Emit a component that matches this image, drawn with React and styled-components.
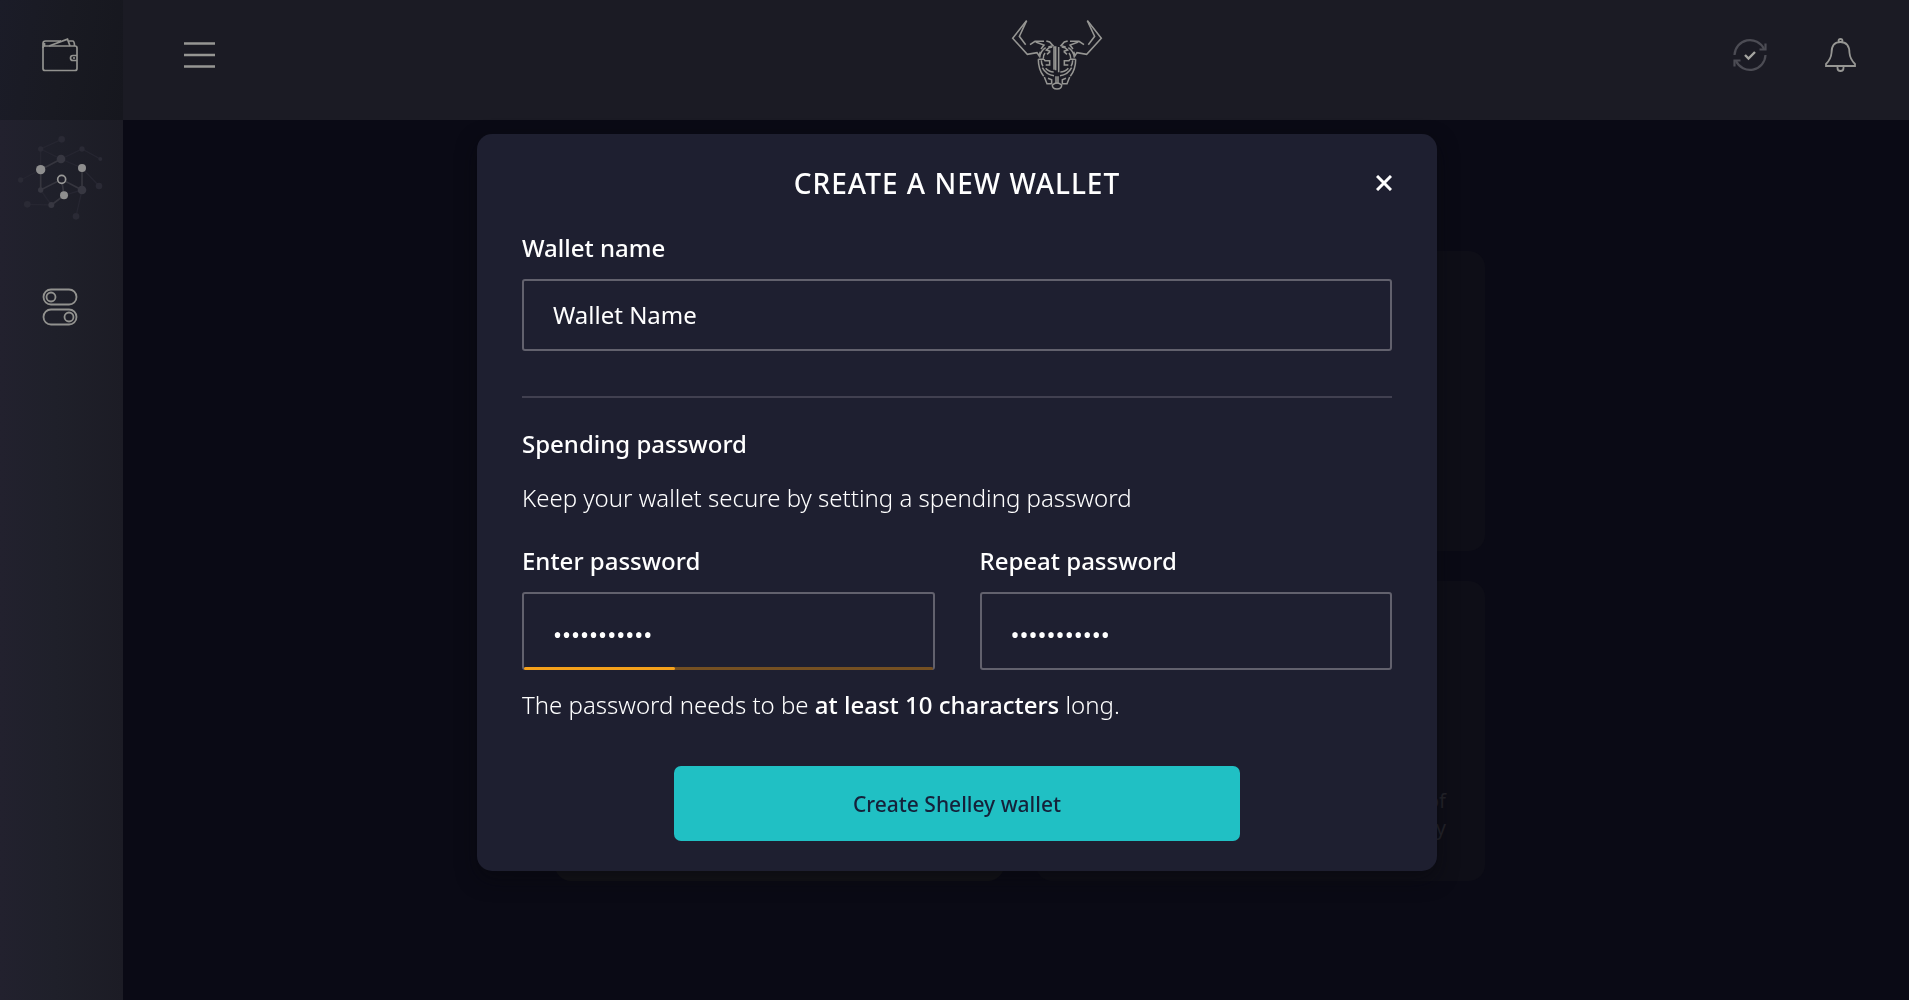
import React, { useState } from "react";
import styled, { createGlobalStyle } from "styled-components";

const GlobalStyle = createGlobalStyle`
  *, *::before, *::after { box-sizing: border-box; }
  body {
    margin: 0;
    background: #0a0a15;
    color: #fff;
    font-family: "Noto Sans", "Open Sans", sans-serif;
    font-size: 24px;
    line-height: 32px;
  }
  button, input { font: inherit; color: inherit; }
`;

const Shell = styled.div`
  display: grid;
  grid-template-columns: 123px 1fr;
  min-height: 100vh;
`;

const Sidebar = styled.nav`
  display: flex;
  flex-direction: column;
  align-items: center;
  background: linear-gradient(90deg, #22212e 0%, #1f202a 45%, #1c1c25 100%);
`;

const SideLink = styled.a`
  display: flex;
  align-items: center;
  justify-content: center;
  width: 100%;
  height: ${(p) => p.$height}px;
  padding-right: 3px;
  padding-bottom: ${(p) => (p.$active ? 10 : 0)}px;
  color: #92928f;
  background: ${(p) => (p.$active ? "linear-gradient(100deg, #1b1c28 0%, #191a22 50%, #16171e 100%)" : "none")};
`;

const Column = styled.div`
  display: flex;
  flex-direction: column;
`;

const TopBar = styled.header`
  display: flex;
  align-items: center;
  height: 120px;
  padding: 0 53px 10px 61px;
  background: #1b1b24;
`;

const IconButton = styled.button`
  display: flex;
  padding: 0;
  border: 0;
  background: none;
  color: ${(p) => p.$color || "#969693"};
  cursor: pointer;
`;

const Brand = styled.div`
  display: flex;
  flex: 1;
  justify-content: center;
  padding-left: 166px;
`;

const Actions = styled.div`
  display: flex;
  align-items: center;
  gap: 58px;
`;

const Main = styled.main`
  display: grid;
  grid-template-columns: repeat(2, 449px);
  grid-auto-rows: 300px;
  gap: 30px 32px;
  justify-content: center;
  padding: 131px 0 0 8px;
`;

const Card = styled.section`
  display: flex;
  align-items: flex-end;
  justify-content: flex-end;
  padding: 0 39px 40px;
  border-radius: 16px;
  background: ${(p) => (p.$lit ? "#131318" : "#0e0e17")};
  color: #24242b;
  font-size: 20px;
  line-height: 27px;
  text-align: right;
`;

const Overlay = styled.div`
  position: fixed;
  inset: 0;
  display: flex;
  align-items: flex-start;
  justify-content: center;
  padding: 134px 0 0 5px;
  overflow: auto;
`;

const Dialog = styled.form`
  width: 100%;
  max-width: 960px;
  padding: 31px 45px 30px;
  border-radius: 15px;
  background: #1e1f30;
  box-shadow: 0 8px 20px rgba(8, 8, 12, 0.5);
`;

const DialogHead = styled.div`
  display: grid;
  grid-template-columns: 16px 1fr 16px;
  align-items: center;
  margin-bottom: 31px;
`;

const Title = styled.h1`
  grid-column: 2;
  margin: 0;
  font-size: 28px;
  font-weight: 500;
  line-height: 36px;
  letter-spacing: 1px;
  text-align: center;
`;

const Field = styled.div`
  display: flex;
  flex-direction: column;
  gap: 15px;
`;

const Label = styled.label`
  font-weight: 500;
`;

const Box = styled.div`
  position: relative;
  display: flex;
`;

const Input = styled.input`
  width: 100%;
  height: ${(p) => (p.type === "password" ? 78 : 72)}px;
  padding: ${(p) => (p.type === "password" ? "6px 29px 0" : "0 29px 2px")};
  border: 2px solid #62616d;
  border-radius: 3px;
  outline: 0;
  background: transparent;
  font-weight: 400;
`;

const Strength = styled.div`
  position: absolute;
  right: 2px;
  bottom: 0;
  left: 2px;
  height: 3px;
  border-radius: 2px;
  background: #755022;
`;

const StrengthFill = styled.div`
  height: 100%;
  border-radius: 2px;
  background: #f5a11b;
`;

const Divider = styled.hr`
  height: 2px;
  margin: 45px 0 30px;
  border: 0;
  background: #414050;
`;

const Subtitle = styled.h2`
  margin: 0 0 22px;
  font-size: 24px;
  font-weight: 500;
  line-height: 32px;
`;

const Text = styled.p`
  margin: 0;
  font-weight: 300;

  b {
    font-weight: 500;
  }
`;

const Pair = styled.div`
  display: grid;
  grid-template-columns: 1fr 1fr;
  gap: 45px;
  margin: 31px 0 19px;
`;

const Submit = styled.button`
  display: block;
  width: 65%;
  height: 75px;
  margin: 45px auto 0;
  border: 0;
  border-radius: 7px;
  background: #20c0c4;
  color: #15213a;
  font-size: 21px;
  font-weight: 500;
  cursor: pointer;
`;

const WalletIcon = () => (
  <svg width="36" height="34" viewBox="0 0 36 34" fill="none" stroke="currentColor" strokeWidth="1.7">
    <rect x="1" y="8" width="34" height="24.5" rx="2" />
    <path d="M1 10V5.500Q1 3 3.500 3H19M2.500 8V5M7 8L25.500 1.200 28 8M27 3h3.500Q32.500 3 32.500 8M35 17.500h-4q-2.500 0-2.500 2.500t2.500 2.500h4M31 20h2" />
  </svg>
);

const faintNodes = [[184, 417, 10], [121, 446, 8], [245, 446, 8], [300, 476, 6], [61, 539, 8], [296, 557, 10], [81, 612, 10], [227, 648, 10]];
const midNodes = [[182, 476, 13], [121, 569, 8], [245, 569, 13], [153, 614, 9]];
const brightNodes = [[121, 508, 14], [245, 503, 12], [191, 585, 12]];
const dots = (nodes, fill) => nodes.map(([x, y, r]) => <circle key={`${x}-${y}`} cx={x} cy={y} r={r} fill={fill} />);

const NetworkIcon = () => (
  <svg width="86" height="86" viewBox="50 404 258 258" fill="none">
    <path d="M184 417L121 446V508L61 539M121 446L182 476 245 446 300 476M182 476L245 503 296 557M121 569L153 614 81 612M245 569L227 648M191 585L245 569" stroke="#262631" strokeWidth="4" />
    <path d="M182 476L121 508V569L184 537 245 569V503M184 537L191 585 153 614" stroke="#36363f" strokeWidth="5" />
    {dots(faintNodes, "#2a2a35")}
    {dots(midNodes, "#373741")}
    {dots(brightNodes, "#8f8f8f")}
    <circle cx="184" cy="537" r="12" fill="#20202b" stroke="#9a9a98" strokeWidth="5" />
  </svg>
);

const TogglesIcon = () => (
  <svg width="36" height="38" viewBox="0 0 36 38" fill="none" stroke="currentColor" strokeWidth="1.8">
    <rect x="1.500" y="1.500" width="33" height="15" rx="7.500" />
    <rect x="1.500" y="21.500" width="33" height="15" rx="7.500" />
    <circle cx="9" cy="9" r="4.500" />
    <circle cx="27" cy="29" r="4.500" />
  </svg>
);

const MenuIcon = () => (
  <svg width="31" height="26" viewBox="0 0 31 26" stroke="currentColor" strokeWidth="2.400">
    <path d="M0 1.500H31M0 13H31M0 24.500H31" />
  </svg>
);

const BullHalf = () => (
  <>
    <path d="M51 33L45 40 9 86 53 134 82 129 88 138 92 126" />
    <path d="M51 33L29 80 48 105M61 105L76 95H103M78 97L103 106 94 118M110 94L120 97 130 108 116 112" />
    <path d="M108 114Q92 124 90 144M128 112Q116 113 110 121L122 125M122 125L112 134" />
    <path d="M106 130Q100 138 101 146M86 149H103M86 149Q86 180 102 200M95 152Q95 164 100 170M103 149L106 153H120V166H108" />
    <path d="M98 174Q110 196 133 198M108 176Q118 187 132 187" />
    <path d="M104 202L112 222H126V210L115 206" />
  </>
);

const BullLogo = () => (
  <svg width="92" height="72" viewBox="4 28 276 216" fill="none" stroke="#969693" strokeWidth="4.6" role="img" aria-label="Home">
    <BullHalf />
    <g transform="matrix(-1 0 0 1 284 0)">
      <BullHalf />
    </g>
    <path d="M133 180V112H138V182M147 188V112M139 200V222M145 200V222" />
    <path d="M128 226Q142 214 156 226Q156 238 142 238T128 226" />
  </svg>
);

const SyncIcon = () => (
  <svg width="34" height="34" viewBox="0 0 34 34" fill="none" stroke="#4c4c54" strokeWidth="2.2">
    <path d="M1.500 17A15.500 15.500 0 0 1 31 11M32.500 17A15.500 15.500 0 0 1 3 23" />
    <path d="M32.500 5.500V11.500H26.500M1.500 28.500V22.500H7.500" />
    <path d="M12 17L15.500 20.500 22 14" stroke="#a5a5a1" strokeWidth="2.400" />
  </svg>
);

const BellIcon = () => (
  <svg width="31" height="34" viewBox="0 0 31 34" fill="none" stroke="currentColor" strokeWidth="1.800">
    <path d="M1 28V26Q6 21 6.500 15 6.500 4 15.500 4T24.500 15Q25 21 30 26V28ZM13.500 4V3Q13.500 1 15.500 1T17.500 3V4M12.500 28V30Q12.500 33 15.500 33T18.500 30V28" />
  </svg>
);

const CloseIcon = () => (
  <svg width="16" height="16" viewBox="0 0 16 16" stroke="currentColor" strokeWidth="3">
    <path d="M1 1L15 15M15 1L1 15" />
  </svg>
);

export default function App() {
  const [name, setName] = useState("Wallet Name");
  const [password, setPassword] = useState("walletpass1");
  const [repeat, setRepeat] = useState("walletpass1");
  const strength = Math.min(100, Math.round((password.length / 30) * 100));

  return (
    <>
      <GlobalStyle />
      <Shell>
        <Sidebar>
          <SideLink href="#wallets" aria-label="Wallets" $height={120} $active><WalletIcon /></SideLink>
          <SideLink href="#network" aria-label="Network" $height={116}><NetworkIcon /></SideLink>
          <SideLink href="#settings" aria-label="Settings" $height={142}><TogglesIcon /></SideLink>
        </Sidebar>
        <Column>
          <TopBar>
            <IconButton type="button" aria-label="Menu"><MenuIcon /></IconButton>
            <Brand><BullLogo /></Brand>
            <Actions>
              <IconButton type="button" aria-label="Sync status"><SyncIcon /></IconButton>
              <IconButton type="button" aria-label="Notifications"><BellIcon /></IconButton>
            </Actions>
          </TopBar>
          <Main>
            <Card />
            <Card />
            <Card $lit />
            <Card>of<br />y</Card>
          </Main>
        </Column>
      </Shell>
      <Overlay>
        <Dialog role="dialog" aria-labelledby="dialog-title" onSubmit={(e) => e.preventDefault()}>
          <DialogHead>
            <Title id="dialog-title">CREATE A NEW WALLET</Title>
            <IconButton type="button" aria-label="Close" $color="#fff"><CloseIcon /></IconButton>
          </DialogHead>
          <Field>
            <Label htmlFor="wallet-name">Wallet name</Label>
            <Input id="wallet-name" type="text" value={name} onChange={(e) => setName(e.target.value)} />
          </Field>
          <Divider />
          <Subtitle>Spending password</Subtitle>
          <Text>Keep your wallet secure by setting a spending password</Text>
          <Pair>
            <Field>
              <Label htmlFor="password">Enter password</Label>
              <Box>
                <Input id="password" type="password" value={password} onChange={(e) => setPassword(e.target.value)} />
                <Strength>
                  <StrengthFill style={{ width: `${strength}%` }} />
                </Strength>
              </Box>
            </Field>
            <Field>
              <Label htmlFor="repeat-password">Repeat password</Label>
              <Input id="repeat-password" type="password" value={repeat} onChange={(e) => setRepeat(e.target.value)} />
            </Field>
          </Pair>
          <Text>The password needs to be <b>at least 10 characters</b> long.</Text>
          <Submit type="submit">Create Shelley wallet</Submit>
        </Dialog>
      </Overlay>
    </>
  );
}
